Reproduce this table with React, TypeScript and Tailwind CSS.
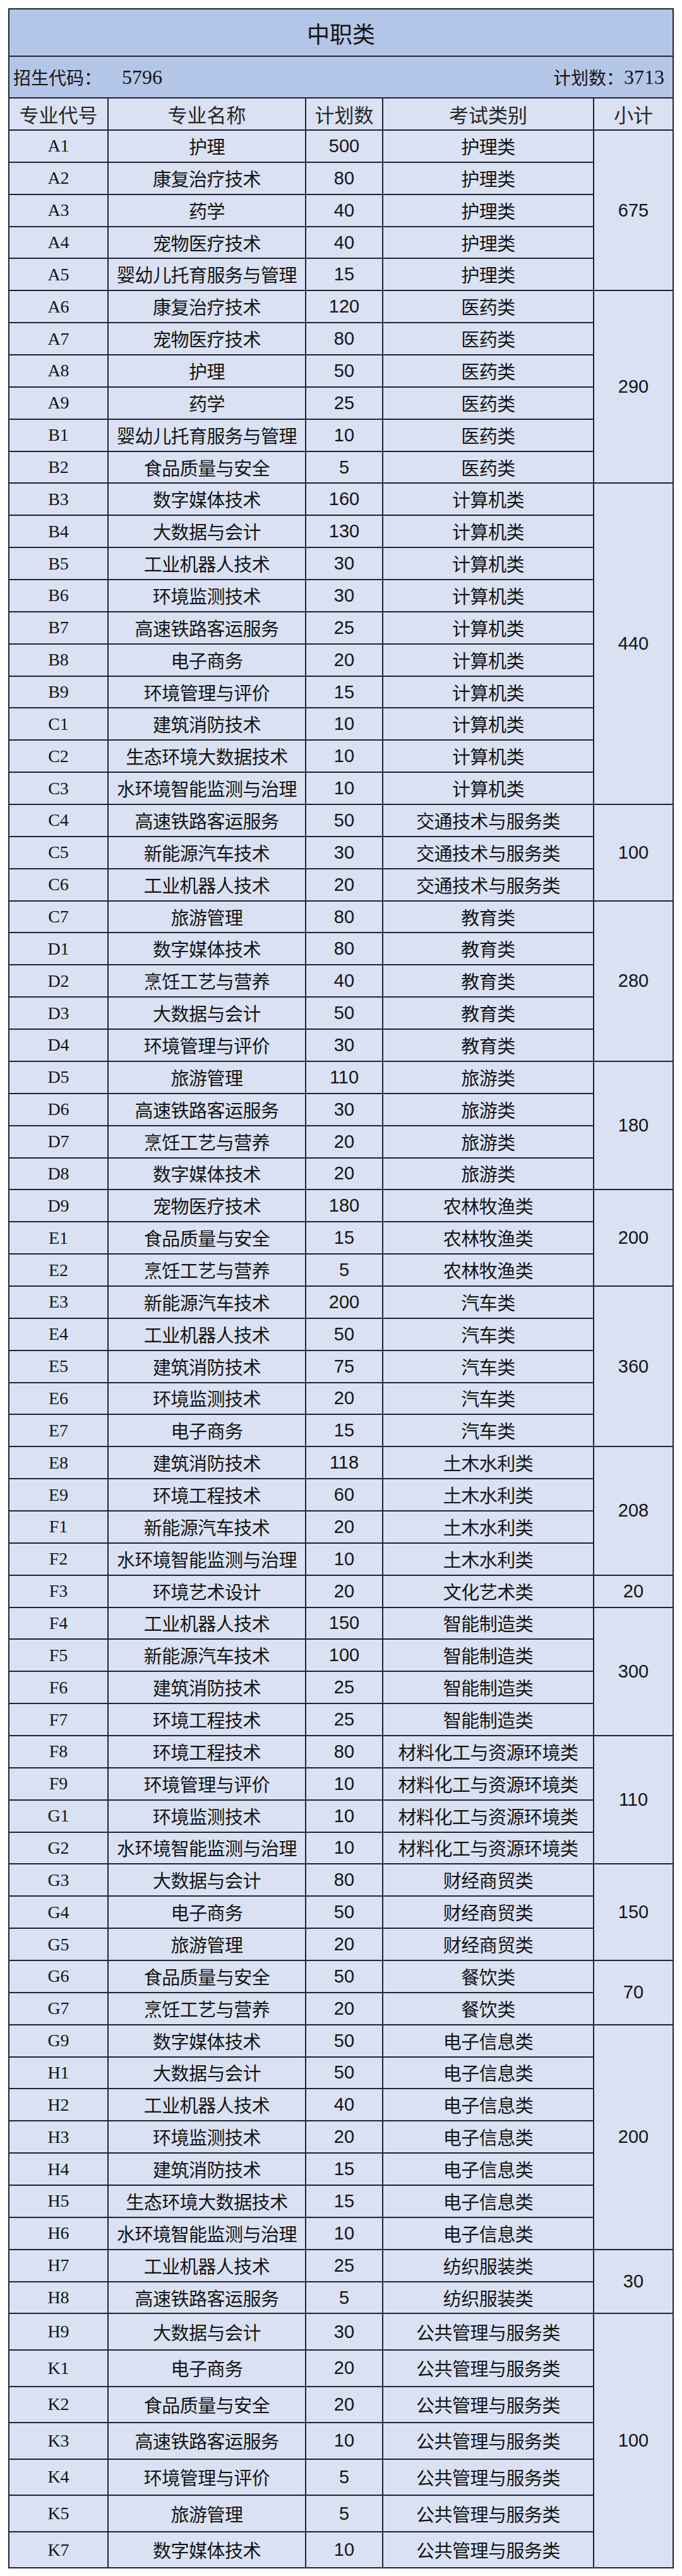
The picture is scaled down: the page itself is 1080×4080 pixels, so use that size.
import React from "react";

type Row = [string, string, number, string];
type Group = { total: number; rows: Row[]; tall?: boolean };

const groups: Group[] = [
  { total: 675, rows: [
    ["A1", "护理", 500, "护理类"],
    ["A2", "康复治疗技术", 80, "护理类"],
    ["A3", "药学", 40, "护理类"],
    ["A4", "宠物医疗技术", 40, "护理类"],
    ["A5", "婴幼儿托育服务与管理", 15, "护理类"],
  ]},
  { total: 290, rows: [
    ["A6", "康复治疗技术", 120, "医药类"],
    ["A7", "宠物医疗技术", 80, "医药类"],
    ["A8", "护理", 50, "医药类"],
    ["A9", "药学", 25, "医药类"],
    ["B1", "婴幼儿托育服务与管理", 10, "医药类"],
    ["B2", "食品质量与安全", 5, "医药类"],
  ]},
  { total: 440, rows: [
    ["B3", "数字媒体技术", 160, "计算机类"],
    ["B4", "大数据与会计", 130, "计算机类"],
    ["B5", "工业机器人技术", 30, "计算机类"],
    ["B6", "环境监测技术", 30, "计算机类"],
    ["B7", "高速铁路客运服务", 25, "计算机类"],
    ["B8", "电子商务", 20, "计算机类"],
    ["B9", "环境管理与评价", 15, "计算机类"],
    ["C1", "建筑消防技术", 10, "计算机类"],
    ["C2", "生态环境大数据技术", 10, "计算机类"],
    ["C3", "水环境智能监测与治理", 10, "计算机类"],
  ]},
  { total: 100, rows: [
    ["C4", "高速铁路客运服务", 50, "交通技术与服务类"],
    ["C5", "新能源汽车技术", 30, "交通技术与服务类"],
    ["C6", "工业机器人技术", 20, "交通技术与服务类"],
  ]},
  { total: 280, rows: [
    ["C7", "旅游管理", 80, "教育类"],
    ["D1", "数字媒体技术", 80, "教育类"],
    ["D2", "烹饪工艺与营养", 40, "教育类"],
    ["D3", "大数据与会计", 50, "教育类"],
    ["D4", "环境管理与评价", 30, "教育类"],
  ]},
  { total: 180, rows: [
    ["D5", "旅游管理", 110, "旅游类"],
    ["D6", "高速铁路客运服务", 30, "旅游类"],
    ["D7", "烹饪工艺与营养", 20, "旅游类"],
    ["D8", "数字媒体技术", 20, "旅游类"],
  ]},
  { total: 200, rows: [
    ["D9", "宠物医疗技术", 180, "农林牧渔类"],
    ["E1", "食品质量与安全", 15, "农林牧渔类"],
    ["E2", "烹饪工艺与营养", 5, "农林牧渔类"],
  ]},
  { total: 360, rows: [
    ["E3", "新能源汽车技术", 200, "汽车类"],
    ["E4", "工业机器人技术", 50, "汽车类"],
    ["E5", "建筑消防技术", 75, "汽车类"],
    ["E6", "环境监测技术", 20, "汽车类"],
    ["E7", "电子商务", 15, "汽车类"],
  ]},
  { total: 208, rows: [
    ["E8", "建筑消防技术", 118, "土木水利类"],
    ["E9", "环境工程技术", 60, "土木水利类"],
    ["F1", "新能源汽车技术", 20, "土木水利类"],
    ["F2", "水环境智能监测与治理", 10, "土木水利类"],
  ]},
  { total: 20, rows: [
    ["F3", "环境艺术设计", 20, "文化艺术类"],
  ]},
  { total: 300, rows: [
    ["F4", "工业机器人技术", 150, "智能制造类"],
    ["F5", "新能源汽车技术", 100, "智能制造类"],
    ["F6", "建筑消防技术", 25, "智能制造类"],
    ["F7", "环境工程技术", 25, "智能制造类"],
  ]},
  { total: 110, rows: [
    ["F8", "环境工程技术", 80, "材料化工与资源环境类"],
    ["F9", "环境管理与评价", 10, "材料化工与资源环境类"],
    ["G1", "环境监测技术", 10, "材料化工与资源环境类"],
    ["G2", "水环境智能监测与治理", 10, "材料化工与资源环境类"],
  ]},
  { total: 150, rows: [
    ["G3", "大数据与会计", 80, "财经商贸类"],
    ["G4", "电子商务", 50, "财经商贸类"],
    ["G5", "旅游管理", 20, "财经商贸类"],
  ]},
  { total: 70, rows: [
    ["G6", "食品质量与安全", 50, "餐饮类"],
    ["G7", "烹饪工艺与营养", 20, "餐饮类"],
  ]},
  { total: 200, rows: [
    ["G9", "数字媒体技术", 50, "电子信息类"],
    ["H1", "大数据与会计", 50, "电子信息类"],
    ["H2", "工业机器人技术", 40, "电子信息类"],
    ["H3", "环境监测技术", 20, "电子信息类"],
    ["H4", "建筑消防技术", 15, "电子信息类"],
    ["H5", "生态环境大数据技术", 15, "电子信息类"],
    ["H6", "水环境智能监测与治理", 10, "电子信息类"],
  ]},
  { total: 30, rows: [
    ["H7", "工业机器人技术", 25, "纺织服装类"],
    ["H8", "高速铁路客运服务", 5, "纺织服装类"],
  ]},
  { total: 100, tall: true, rows: [
    ["H9", "大数据与会计", 30, "公共管理与服务类"],
    ["K1", "电子商务", 20, "公共管理与服务类"],
    ["K2", "食品质量与安全", 20, "公共管理与服务类"],
    ["K3", "高速铁路客运服务", 10, "公共管理与服务类"],
    ["K4", "环境管理与评价", 5, "公共管理与服务类"],
    ["K5", "旅游管理", 5, "公共管理与服务类"],
    ["K7", "数字媒体技术", 10, "公共管理与服务类"],
  ]},
];

const cjk = "font-['Noto_Sans_CJK_SC',sans-serif]";
const cell = "flex items-center justify-center border-r-2 border-[#1f2430] leading-none";

function DataRow({ row, tall }: { row: Row; tall?: boolean }) {
  const [code, name, plan, cat] = row;
  return (
    <div className={`flex border-b-2 border-[#1f2430] ${tall ? "h-[57.57px]" : "h-[50.87px]"}`}>
      <div className={`${cell} w-[157px] font-['Liberation_Serif',serif] text-[28px]`}>{code}</div>
      <div className={`${cell} w-[313px] ${cjk} text-[29px] tracking-[-0.5px]`}>{name}</div>
      <div className={`${cell} w-[122px] font-['Liberation_Sans',sans-serif] text-[29px]`}>{plan}</div>
      <div className={`${cell} w-[334px] ${cjk} text-[29px] tracking-[-0.5px]`}>{cat}</div>
    </div>
  );
}

export default function App() {
  return (
    <div className="min-h-[4080px] bg-white pt-[13px]">
      <div className="mx-[13px] w-[1054px] border-x-2 border-t-2 border-[#1f2430] bg-[#d9e1f2] text-[#141414]">
        <div className={`flex h-[75px] items-center justify-center border-b-2 border-[#1f2430] bg-[#b4c6e7] ${cjk} text-[36px] leading-none`}>
          中职类
        </div>
        <div className="flex h-[66px] items-center justify-between border-b-2 border-[#1f2430] bg-[#b4c6e7] pl-[6px] pr-[13px] leading-none">
          <div className="flex items-center">
            <span className={`${cjk} text-[28px]`}>招生代码：</span>
            <span className="ml-[32px] font-['Liberation_Serif',serif] text-[32px]">5796</span>
          </div>
          <div className="flex items-center">
            <span className={`${cjk} text-[28px]`}>计划数：</span>
            <span className="font-['Liberation_Serif',serif] text-[32px]">3713</span>
          </div>
        </div>
        <div className={`flex h-[51px] border-b-2 border-[#1f2430] ${cjk} text-[31px] text-[#262626]`}>
          <div className={`${cell} w-[157px]`}>专业代号</div>
          <div className={`${cell} w-[313px]`}>专业名称</div>
          <div className={`${cell} w-[122px]`}>计划数</div>
          <div className={`${cell} w-[334px]`}>考试类别</div>
          <div className="flex flex-1 items-center justify-center leading-none">小计</div>
        </div>
        {groups.map((g, gi) => (
          <div key={gi} className="flex">
            <div className="flex flex-col">
              {g.rows.map((r) => (
                <DataRow key={r[0]} row={r} tall={g.tall} />
              ))}
            </div>
            <div className="flex flex-1 items-center justify-center border-b-2 border-[#1f2430] font-['Liberation_Sans',sans-serif] text-[29px] leading-none">
              {g.total}
            </div>
          </div>
        ))}
      </div>
    </div>
  );
}
